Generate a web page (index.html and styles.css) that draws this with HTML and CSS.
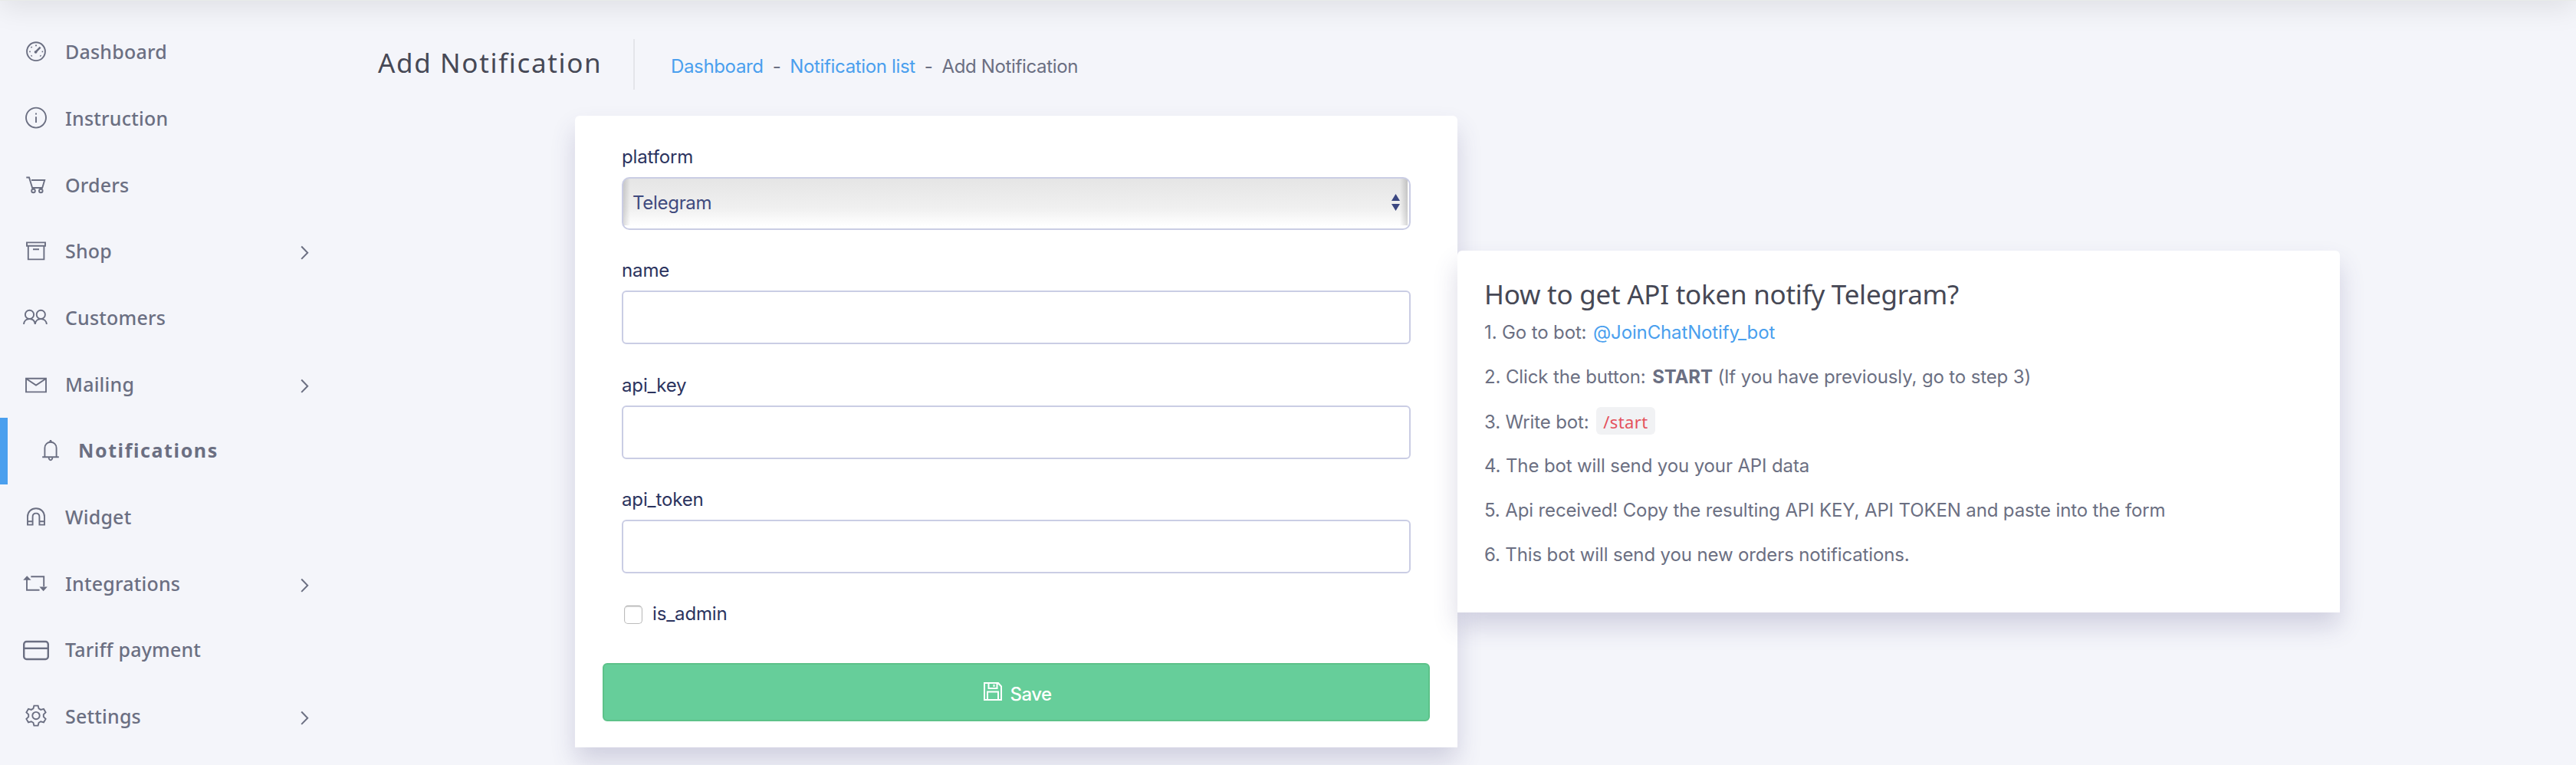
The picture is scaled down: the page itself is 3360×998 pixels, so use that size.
FILE: index.html
```html
<!DOCTYPE html>
<html lang="en">
<head>
    <meta charset="UTF-8">
    <meta name="viewport" content="width=device-width, initial-scale=1.0">
    <title>Add Notification</title>
    <link rel="stylesheet" href="styles.css">
</head>
<body>
    <div class="topbar"></div>

    <!-- Sidebar -->
    <nav class="sidebar">
        <ul class="menu">
            <li class="menu-item">
                <svg class="icon" viewBox="0 0 34 35"><circle cx="17" cy="16.2" r="11.9"/><path d="M17 16.4L22.6 10.6" stroke-width="2.4"/><circle class="dot" cx="16.6" cy="16.8" r="1.9"/><path d="M17 7.6v1.6M8.2 16.4h1.6M24.6 16.4h1.6M10.6 10.2l1 1M10.6 22.4l1-1M23.4 22.4l-1-1"/></svg>
                <span>Dashboard</span>
            </li>
            <li class="menu-item">
                <svg class="icon" viewBox="0 0 34 35"><circle cx="17" cy="16.6" r="13"/><path d="M17 15.2v7.8M17 10.4v2"/></svg>
                <span>Instruction</span>
            </li>
            <li class="menu-item">
                <svg class="icon" viewBox="0 0 34 35"><path d="M4.3 7.5H8l4.4 14.4M11 11h17.2l-3 10H12"/><circle cx="13.5" cy="25" r="2.3"/><circle cx="23.3" cy="25" r="2.3"/></svg>
                <span>Orders</span>
            </li>
            <li class="menu-item">
                <svg class="icon" viewBox="0 0 34 35"><path d="M5 5.4h24v4.4H5zM6.8 9.8v17.6h20.6V9.8M13 14.3h8"/></svg>
                <span>Shop</span>
                <svg class="arrow" viewBox="0 0 12 20"><path d="M1.2 1.5l8 8.2-8 8.2"/></svg>
            </li>
            <li class="menu-item">
                <svg class="icon" viewBox="0 0 34 35"><circle cx="8.5" cy="13.4" r="5.6"/><circle cx="23.3" cy="13.4" r="5.6"/><path d="M1 26c.3-4.2 3.2-7 7.4-7s7 2.8 7.4 7c.4-4.2 3.3-7 7.5-7s7.2 2.8 7.6 7"/></svg>
                <span>Customers</span>
            </li>
            <li class="menu-item">
                <svg class="icon" viewBox="0 0 34 35"><path d="M4 9.8h26v17.6H4zM4.5 10.3L17 18.6l12.5-8.3"/></svg>
                <span>Mailing</span>
                <svg class="arrow" viewBox="0 0 12 20"><path d="M1.2 1.5l8 8.2-8 8.2"/></svg>
            </li>
            <li class="menu-item active">
                <svg class="icon" viewBox="0 0 34 35"><path d="M6.2 25.2h21.6M9.4 25V13.4c0-4.6 3.4-7.6 7.6-7.6s7.6 3 7.6 7.6V25M17 3v3M14.7 25.6c-.4 4.8 5 4.8 4.6 0"/><circle class="dot" cx="17" cy="4.7" r="1.7"/></svg>
                <span>Notifications</span>
            </li>
            <li class="menu-item">
                <svg class="icon" viewBox="0 0 34 35"><path d="M6 27.6V17c0-6.4 4.8-10.8 11-10.8S28 10.6 28 17v10.6h-6.6V17.2c0-2.8-1.8-4.6-4.4-4.6s-4.4 1.8-4.4 4.6v10.4zM6 23.2h6.6M21.4 23.2H28"/></svg>
                <span>Widget</span>
            </li>
            <li class="menu-item">
                <svg class="icon" viewBox="0 0 34 35"><path d="M5 11v14.8h16.5M10.3 8.2h16.9v13"/><path class="dot" d="M.2 12.8L5.2 7.2l5.4 5.6zM21.4 21.6h10.4l-5.2 5.6z"/></svg>
                <span>Integrations</span>
                <svg class="arrow" viewBox="0 0 12 20"><path d="M1.2 1.5l8 8.2-8 8.2"/></svg>
            </li>
            <li class="menu-item">
                <svg class="icon thick" viewBox="0 0 34 35"><rect x="1.2" y="6" width="31.6" height="23" rx="3.4"/><path d="M1.2 14.8h31.6"/></svg>
                <span>Tariff payment</span>
            </li>
            <li class="menu-item">
                <svg class="icon" viewBox="0 0 34 35"><g transform="translate(17 16.6)"><circle r="4.7"/><path d="M-3.6-9.2L-2.6-13h5.2l1 3.8 2.6 1.5 3.8-1 2.6 4.4-2.8 2.8v3l2.8 2.8-2.6 4.4-3.8-1-2.6 1.5-1 3.8h-5.2l-1-3.8-2.6-1.5-3.8 1-2.6-4.4 2.8-2.8v-3l-2.8-2.8 2.6-4.4 3.8 1z"/></g></svg>
                <span>Settings</span>
                <svg class="arrow" viewBox="0 0 12 20"><path d="M1.2 1.5l8 8.2-8 8.2"/></svg>
            </li>
        </ul>
    </nav>

    <main class="content">
        <div class="content-header">
            <h1>Add Notification</h1>
            <div class="breadcrumb">
                <a href="#">Dashboard</a><i>-</i><a href="#">Notification list</a><i>-</i><span>Add Notification</span>
            </div>
        </div>

        <div class="cards">
            <!-- Notification form -->
            <form class="card form-card">
                <div class="field">
                    <label for="platform">platform</label>
                    <div class="select-wrap">
                        <select id="platform"><option>Telegram</option></select>
                        <svg class="select-arrows" viewBox="0 0 11 22"><path d="M0 9l5.5-9L11 9zM0 13h11l-5.5 9z"/></svg>
                    </div>
                </div>
                <div class="field">
                    <label for="name">name</label>
                    <input type="text" id="name">
                </div>
                <div class="field">
                    <label for="api_key">api_key</label>
                    <input type="text" id="api_key">
                </div>
                <div class="field">
                    <label for="api_token">api_token</label>
                    <input type="text" id="api_token">
                </div>
                <div class="check">
                    <input type="checkbox" id="is_admin">
                    <label for="is_admin">is_admin</label>
                </div>
                <button type="button" class="save-btn">
                    <svg viewBox="0 0 24 24"><path d="M1 1h18l4 4.5V23H1zM6.5 1v7h11V1M13.5 3v3M5 23V12.5h14V23"/></svg>
                    <span>Save</span>
                </button>
            </form>

            <!-- Instructions -->
            <div class="card help-card">
                <h2>How to get API token notify Telegram?</h2>
                <p>1. Go to bot: <a href="#">@JoinChatNotify_bot</a></p>
                <p>2. Click the button: <b>START</b> (If you have previously, go to step 3)</p>
                <p>3. Write bot: <code>/start</code></p>
                <p>4. The bot will send you your API data</p>
                <p>5. Api received! Copy the resulting API KEY, API TOKEN and paste into the form</p>
                <p>6. This bot will send you new orders notifications.</p>
            </div>
        </div>
    </main>
</body>
</html>
```
FILE: styles.css
```css
* {
    box-sizing: border-box;
}

body {
    display: flex;
    height: 998px;
    margin: 0;
    overflow: hidden;
    background-color: #f4f5fa;
    color: #6b6f82;
    font-family: Inter, "Liberation Sans", sans-serif;
    font-size: 24px;
    line-height: 36px;
    letter-spacing: -0.13px;
}

a {
    color: #4a9fee;
    text-decoration: none;
}

/* only the bottom edge and the shadow of the bar are visible */
.topbar {
    position: absolute;
    top: -79px;
    left: 0;
    right: 0;
    height: 80px;
    background-color: #e8ebe8;
    box-shadow: 0 10px 36px rgba(0, 0, 0, 0.085);
    pointer-events: none;
}

/* Sidebar */
.sidebar {
    width: 480px;
    padding-top: 25px;
    font-family: "Noto Sans", sans-serif;
    font-size: 25px;
    font-weight: 500;
    letter-spacing: 0.2px;
}

.menu {
    margin: 0;
    padding: 0;
    list-style: none;
}

.menu-item {
    display: flex;
    align-items: center;
    height: 86.67px;
    padding: 0 76px 0 30px;
}

.menu-item span {
    margin: -2px 0 0 21px;
}

.menu-item.active {
    padding-left: 39px;
    border-left: 10px solid #4a9fee;
    font-weight: 700;
    letter-spacing: 1.6px;
}

.menu-item.active .icon + span {
    margin-left: 19px;
}

.icon {
    width: 34px;
    height: 35px;
    fill: none;
    stroke: #6b6f82;
    stroke-width: 1.9;
}

.icon.thick {
    stroke-width: 2.4;
}

.icon .dot {
    fill: #6b6f82;
    stroke: none;
}

.arrow {
    width: 12px;
    height: 20px;
    margin: 4px 0 0 auto;
    fill: none;
    stroke: #6b6f82;
    stroke-width: 2;
}

/* Content */
.content {
    flex: 1;
    padding-top: 51px;
}

.content-header {
    display: flex;
    align-items: flex-start;
    height: 66px;
    padding-left: 13px;
}

h1, h2 {
    margin: 0;
    color: #464855;
    font-family: "Noto Sans", sans-serif;
    font-size: 35px;
    font-weight: 450;
}

h1 {
    width: 335px;
    height: 66px;
    line-height: 62px;
    letter-spacing: 1.65px;
    border-right: 2px solid #e4e5ea;
}

.breadcrumb {
    margin: 18px 0 0 47px;
    letter-spacing: -0.35px;
}

.breadcrumb i {
    margin: 0 12px;
    font-style: normal;
}

.cards {
    display: flex;
    align-items: center;
    margin: 34px 0 0 270px;
}

.card {
    width: 1151px;
    background-color: #fff;
    border-radius: 6px 6px 0 0;
    box-shadow: 0 18px 32px rgba(69, 65, 124, 0.2);
}

/* Form */
.form-card {
    height: 824px;
    padding: 36px 36px 33px;
    color: #2b335e;
}

.field {
    margin: 0 25px 35.7px;
}

.field label {
    display: block;
    margin-bottom: 7.8px;
}

.field input,
.field select {
    display: block;
    width: 100%;
    height: 70px;
    border: 2px solid #cacde4;
    border-radius: 6px;
    background-color: #fff;
}

.select-wrap {
    position: relative;
}

.field select {
    height: 69px;
    padding: 0 12px;
    appearance: none;
    border-radius: 10px;
    background-image:
        linear-gradient(#fff, #fff),
        linear-gradient(to left, rgba(0, 0, 0, 0.16), transparent),
        linear-gradient(to right, rgba(0, 0, 0, 0.14), transparent),
        linear-gradient(#e5e5e5, #f0f0f0 60%, #fff 95%);
    background-position: right top, right 2px top, left top, left top;
    background-size: 2px 100%, 10px 94%, 9px 94%, 100% 100%;
    background-repeat: no-repeat;
    color: #3f4a7e;
    font: inherit;
    letter-spacing: -0.3px;
}

.select-arrows {
    position: absolute;
    top: 22px;
    right: 14px;
    width: 11px;
    height: 22px;
    fill: #3b4781;
}

.check {
    display: flex;
    align-items: center;
    margin: -1px 28px 46.5px;
}

.check input {
    width: 24px;
    height: 24px;
    margin: 2px 13px 0 0;
    appearance: none;
    border: 1px solid #bcbcbc;
    border-top-color: #9f9f9f;
    border-radius: 5px;
    box-shadow: inset 0 1px 2px rgba(0, 0, 0, 0.12);
}

.save-btn {
    display: flex;
    align-items: center;
    justify-content: center;
    width: 100%;
    height: 76px;
    padding: 0 0 0 3px;
    border: 2px solid #5dc289;
    border-radius: 6px;
    background-color: #66ce9a;
    color: #fff;
    font: inherit;
    font-weight: 500;
    letter-spacing: -0.6px;
}

.save-btn svg {
    width: 24px;
    height: 24px;
    margin: -2px 11px 0 0;
    fill: none;
    stroke: #fff;
    stroke-width: 2;
}

.save-btn span {
    margin-top: 6px;
}

/* Help */
.help-card {
    height: 472px;
    padding: 35px;
}

.help-card h2 {
    margin-bottom: 11px;
    line-height: 43px;
    letter-spacing: -0.25px;
}

.help-card p {
    margin: 0 0 21.8px;
    letter-spacing: -0.13px;
}

.help-card p a,
.help-card p b {
    margin-left: 2px;
}

code {
    margin-left: 3px;
    padding: 4px 9px 2px;
    border-radius: 6px;
    background-color: #f1f2f4;
    color: #e4515c;
    font-family: "Noto Sans", sans-serif;
    font-size: 22px;
    letter-spacing: 0.4px;
}
```
